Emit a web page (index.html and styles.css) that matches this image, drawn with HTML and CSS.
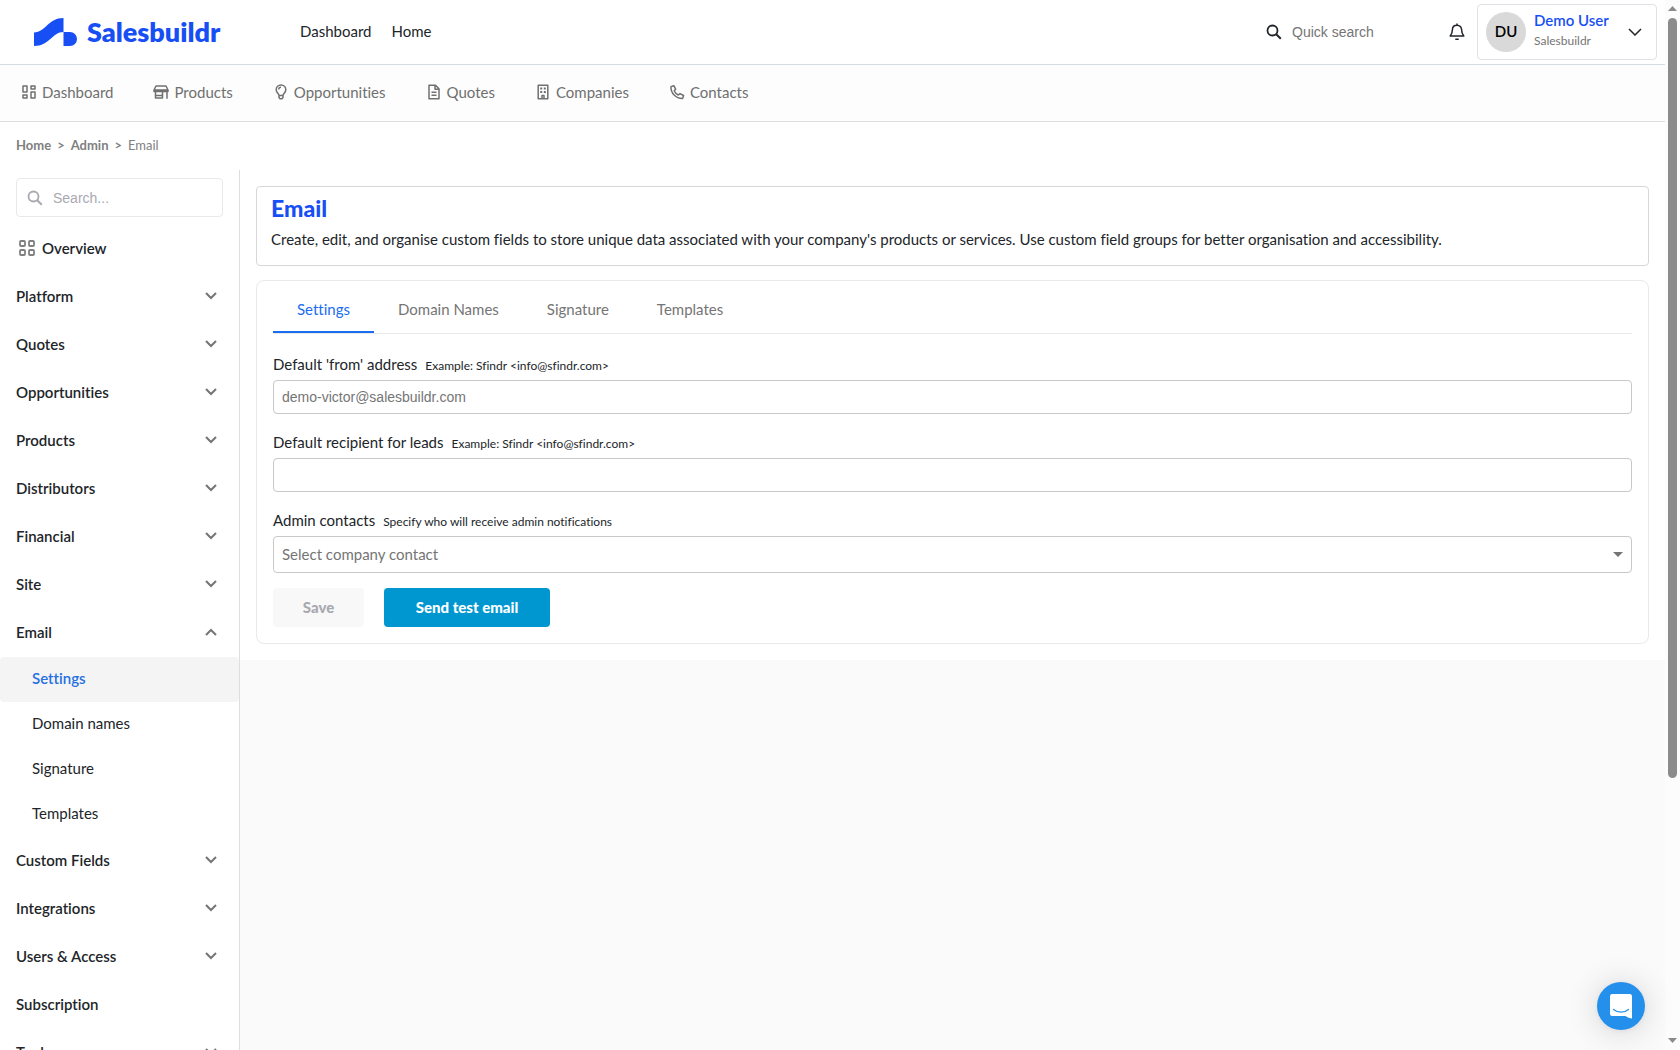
FILE: index.html
```html
<!DOCTYPE html>
<html lang="en">
<head>
<meta charset="utf-8">
<meta name="viewport" content="width=device-width, initial-scale=1">
<title>Email - Salesbuildr</title>
<link rel="stylesheet" href="styles.css">
</head>
<body>
<svg class="sprite" aria-hidden="true">
  <symbol id="down" viewBox="0 0 12 8"><path d="M1 1l5 5 5-5" fill="none" stroke="currentColor" stroke-width="2"/></symbol>
  <symbol id="search" viewBox="0 0 16 16"><circle cx="6.500" cy="6.500" r="5" fill="none" stroke="currentColor" stroke-width="1.800"/><path d="M10.200 10.200l4.600 4.600" stroke="currentColor" stroke-width="2"/></symbol>
</svg>
<div class="window">
  <div class="page">
    <header class="topbar">
      <a class="logo" href="#">
        <svg width="44" height="28" viewBox="0 0 44 28" fill="currentColor" aria-hidden="true"><path d="M0 14.500C12 14 14 0 29.500 0V14C18 14 16 28 0 28z"/><path d="M29.500 14H36a7 7 0 0 1 0 14h-6.500z"/></svg>
        <span>Salesbuildr</span>
      </a>
      <nav class="toplinks"><a href="#">Dashboard</a><a href="#">Home</a></nav>
      <label class="quick"><svg width="16" height="16" aria-hidden="true"><use href="#search"/></svg><input type="search" placeholder="Quick search" aria-label="Quick search"></label>
      <button class="bell" type="button" aria-label="Notifications"><svg width="16" height="18" viewBox="0 0 16 18" fill="none" stroke="currentColor" stroke-width="1.500"><path d="M8 2.200c-2.800 0-4.600 2-4.600 4.600 0 3-.8 4.500-2.200 6.200h13.600c-1.400-1.700-2.200-3.200-2.200-6.200 0-2.600-1.800-4.600-4.600-4.600zM8 .6v1.600M6.300 16.200h3.400" stroke-linejoin="round"/></svg></button>
      <button class="user" type="button">
        <span class="avatar">DU</span>
        <span class="who"><span class="name">Demo User</span><span class="org">Salesbuildr</span></span>
        <svg width="14" height="8" viewBox="0 0 14 8" fill="none" stroke="currentColor" stroke-width="1.500" aria-hidden="true"><path d="M1 1l6 6 6-6"/></svg>
      </button>
    </header>

    <nav class="modules">
      <a href="#"><svg viewBox="0 0 18 18"><path d="M3 3h4v6H3zM11 3h4v3h-4zM11 9h4v6h-4zM3 12h4v3H3z" stroke-linejoin="round"/></svg>Dashboard</a>
      <a href="#"><svg viewBox="0 0 18 18"><path d="M4 3h10l2 4v1.500H2V7zM3.500 8.500V15h7V8.500M3.500 12.500h7M15 8.500V15.700M2 7h14" stroke-linejoin="round"/></svg>Products</a>
      <a href="#"><svg viewBox="0 0 18 18"><path d="M7 12.500C7 10.500 4.200 9.800 4.200 6.700a4.800 4.800 0 0 1 9.600 0c0 3.100-2.800 3.800-2.800 5.800zM7 12.500v2l1 1.200h2l1-1.200v-2M6.700 6.500A2.300 2.300 0 0 1 9 4.300"/></svg>Opportunities</a>
      <a href="#"><svg viewBox="0 0 18 18"><path d="M4 2.200h6.500L14 5.700v10H4zM10 2.500v3.700h4M6.500 9.200h5M6.500 12.200h5" stroke-linejoin="round"/></svg>Quotes</a>
      <a href="#"><svg viewBox="0 0 18 18"><path d="M4.200 2.200h9.600v13.500H4.200zM8 15.500v-3h2v3" stroke-linejoin="round"/><path d="M6.200 5.500h2M9.800 5.500h2M6.200 9h2M9.800 9h2" stroke-width="2"/></svg>Companies</a>
      <a href="#"><svg viewBox="0 0 18 18"><path d="M5.800 2.700L3 3.600c-.5 6.500 5 12 11.600 11.800l1-2.900-3.600-1.900-1.700 1.400C8.300 11.100 7 9.600 6.200 7.800l1.500-1.700z" stroke-linejoin="round"/></svg>Contacts</a>
    </nav>

    <nav class="crumbs" aria-label="Breadcrumb"><a href="#">Home</a><b>&gt;</b><a href="#">Admin</a><b>&gt;</b><span>Email</span></nav>

    <div class="body">
      <aside class="sidebar">
        <label class="filter"><svg width="16" height="16" aria-hidden="true"><use href="#search"/></svg><input type="search" placeholder="Search..." aria-label="Search settings"></label>
        <a class="group overview" href="#"><svg width="18" height="18" viewBox="0 0 18 18" fill="none" stroke="currentColor" stroke-width="1.800" aria-hidden="true"><rect x="2" y="2" width="5" height="5" rx="1"/><rect x="11" y="2" width="5" height="5" rx="1"/><rect x="2" y="11" width="5" height="5" rx="1"/><rect x="11" y="11" width="5" height="5" rx="1"/></svg>Overview</a>
        <button class="group" type="button">Platform<svg class="chev"><use href="#down"/></svg></button>
        <button class="group" type="button">Quotes<svg class="chev"><use href="#down"/></svg></button>
        <button class="group" type="button">Opportunities<svg class="chev"><use href="#down"/></svg></button>
        <button class="group" type="button">Products<svg class="chev"><use href="#down"/></svg></button>
        <button class="group" type="button">Distributors<svg class="chev"><use href="#down"/></svg></button>
        <button class="group" type="button">Financial<svg class="chev"><use href="#down"/></svg></button>
        <button class="group" type="button">Site<svg class="chev"><use href="#down"/></svg></button>
        <button class="group" type="button" aria-expanded="true">Email<svg class="chev open"><use href="#down"/></svg></button>
        <a class="sub current" href="#">Settings</a>
        <a class="sub" href="#">Domain names</a>
        <a class="sub" href="#">Signature</a>
        <a class="sub" href="#">Templates</a>
        <button class="group" type="button">Custom Fields<svg class="chev"><use href="#down"/></svg></button>
        <button class="group" type="button">Integrations<svg class="chev"><use href="#down"/></svg></button>
        <button class="group" type="button">Users &amp; Access<svg class="chev"><use href="#down"/></svg></button>
        <a class="group" href="#">Subscription</a>
        <button class="group" type="button">Tools<svg class="chev"><use href="#down"/></svg></button>
      </aside>

      <main class="content">
        <section class="intro">
          <h1>Email</h1>
          <p>Create, edit, and organise custom fields to store unique data associated with your company's products or services. Use custom field groups for better organisation and accessibility.</p>
        </section>
        <form class="panel">
          <div class="tabs" role="tablist">
            <button type="button" role="tab" aria-selected="true">Settings</button>
            <button type="button" role="tab">Domain Names</button>
            <button type="button" role="tab">Signature</button>
            <button type="button" role="tab">Templates</button>
          </div>
          <label class="caption" for="from">Default 'from' address<small>Example: Sfindr &lt;info@sfindr.com&gt;</small></label>
          <input class="field" id="from" type="text" placeholder="demo-victor@salesbuildr.com">
          <label class="caption" for="leads">Default recipient for leads<small>Example: Sfindr &lt;info@sfindr.com&gt;</small></label>
          <input class="field" id="leads" type="text">
          <label class="caption" for="contacts">Admin contacts<small>Specify who will receive admin notifications</small></label>
          <div class="picker">
            <select id="contacts"><option>Select company contact</option></select>
            <svg width="10" height="5" viewBox="0 0 10 5" aria-hidden="true"><path d="M0 0h10L5 5z" fill="currentColor"/></svg>
          </div>
          <div class="actions"><button class="save" type="submit" disabled>Save</button><button class="send" type="button">Send test email</button></div>
        </form>
      </main>
    </div>
  </div>
  <div class="scrollbar" aria-hidden="true">
    <svg width="9" height="5" viewBox="0 0 9 5"><path d="M0 5L4.500 0 9 5z" fill="currentColor"/></svg>
    <div class="track"><div class="thumb"></div></div>
    <svg width="9" height="5" viewBox="0 0 9 5"><path d="M0 0h9L4.500 5z" fill="currentColor"/></svg>
  </div>
</div>
<button class="chat" type="button" aria-label="Open chat"><svg width="22" height="25" viewBox="0 0 22 25" aria-hidden="true"><path d="M2.500 0h17A2.300 2.300 0 0 1 22 2.300V24.500c-2-.3-4.500-1-6.500-2.500h-13A2.300 2.300 0 0 1 0 19.700V2.300A2.300 2.300 0 0 1 2.500 0z" fill="#fff"/><path d="M3.500 15.500c4.500 3.600 10.500 3.600 15 0" fill="none" stroke="#2490ec" stroke-width="1.300" stroke-linecap="round"/></svg></button>
</body>
</html>
```
FILE: styles.css
```css
* { box-sizing: border-box; }
body { margin: 0; font: 15px/20px Lato, "Open Sans", sans-serif; font-variant-ligatures: none; color: #212529; background: #fafafa; }
a { color: inherit; text-decoration: none; }
button { font: inherit; font-variant-ligatures: none; color: inherit; background: none; border: 0; padding: 0; text-align: left; }
input { font: 14px/20px "Liberation Sans", Arial, sans-serif; color: #333; background: none; border: 0; padding: 0; min-width: 0; outline: 0; }
input::placeholder { color: #757575; opacity: 1; }
svg { flex-shrink: 0; }
.sprite { display: none; }

.window { display: grid; grid-template-columns: minmax(0, 1fr) 15px; height: 100vh; }
.page { overflow-y: auto; scrollbar-width: none; }

.topbar { display: flex; align-items: center; height: 65px; padding: 0 8px 0 34px; background: #fff; border-bottom: 1px solid #d5dce2; }
.logo { display: flex; align-items: center; gap: 9px; width: 266px; color: #174ff5; font-size: 27px; font-weight: 800; line-height: 32px; }
.toplinks { display: flex; gap: 20px; margin-right: auto; padding-bottom: 2px; }
.quick { display: flex; align-items: center; gap: 10px; }
.quick input { width: 141px; }
.bell { display: flex; margin: 0 12px 0 16px; }
.user { display: flex; align-items: center; width: 180px; height: 56px; padding: 0 14px 0 8px; border: 1px solid #dee2e6; border-radius: 4px; background: #fff; }
.avatar { display: grid; place-items: center; width: 40px; height: 40px; padding-bottom: 2px; border-radius: 50%; background: #d9d9d9; color: #000; font-weight: 600; }
.who { display: flex; flex-direction: column; margin: 0 auto 0 8px; padding-bottom: 2px; }
.name { color: #174ff5; font-weight: 600; }
.org { color: #757575; font-size: 12px; line-height: 22px; }

.modules { display: flex; align-items: center; gap: 39px; height: 57px; padding: 0 20px 2px; color: #707070; background: #fdfdfd; border-bottom: 1px solid #dcdfe1; }
.modules a { display: flex; align-items: center; gap: 4px; }
.modules svg { width: 18px; height: 18px; fill: none; stroke: currentColor; stroke-width: 1.500; }

.crumbs { display: flex; align-items: center; gap: 6px; height: 48px; padding: 0 16px 2px; background: #fff; color: #808080; font-size: 13px; }
.crumbs a, .crumbs b { font-weight: 700; }

.body { display: grid; grid-template-columns: 240px minmax(0, 1fr); align-items: start; }
.sidebar { display: flex; flex-direction: column; padding-top: 8px; background: #fff; border-right: 1px solid #dcdfe1; }
.filter { display: flex; align-items: center; gap: 10px; height: 39px; margin: 0 16px 8px; padding: 0 10px; border: 1px solid #e9e9e9; border-radius: 4px; color: #a9a9b0; }
.filter input::placeholder { color: #a9a9b0; }
.group { display: flex; align-items: center; height: 48px; padding: 0 22px 2px 16px; font-weight: 600; }
.overview { gap: 6px; padding-left: 18px; }
.overview svg { color: #808080; }
.chev { width: 12px; height: 8px; margin-left: auto; color: #757575; }
.open { transform: rotate(180deg); }
.sub { padding: 11px 32px 14px; border-radius: 4px; }
.current { background: #f4f4f4; color: #2470e0; font-weight: 600; }

.content { padding: 16px; background: #fff; }
.intro { padding: 9px 14px 14px; border: 1px solid #d5d8da; border-radius: 4px; }
.intro h1 { margin: 0 0 7px; color: #174ff5; font-size: 23px; font-weight: 900; line-height: 24px; }
.intro p { margin: 0; line-height: 24px; }
.panel { margin-top: 14px; padding: 16px; border: 1px solid #e9e9e9; border-radius: 8px; }
.tabs { display: flex; height: 37px; margin-bottom: 20px; border-bottom: 1px solid #e9e9e9; }
.tabs button { padding: 2px 24px 12px; border-bottom: 2px solid transparent; color: #757575; }
.tabs [aria-selected] { color: #1a6cf0; border-color: #1a6cf0; }
.caption { display: flex; align-items: baseline; gap: 8px; margin-bottom: 4px; }
.caption small { font-size: 12px; }
.field { display: block; width: 100%; height: 34px; margin-bottom: 18px; padding: 0 8px; border: 1px solid #c8c8c8; border-radius: 4px; }
.picker { display: grid; align-items: center; }
.picker > * { grid-area: 1 / 1; }
.picker select { appearance: none; height: 37px; padding: 0 8px 2px; border: 1px solid #c8c8c8; border-radius: 4px; background: #fff; color: #757575; font: inherit; }
.picker svg { justify-self: end; margin-right: 9px; color: #757575; pointer-events: none; }
.actions { display: flex; gap: 20px; margin-top: 15px; font-weight: 900; }
.actions button { height: 39px; padding-bottom: 2px; border-radius: 4px; text-align: center; }
.save { width: 91px; background: #f8f8f8; color: #a9a9b0; }
.send { width: 166px; background: #0097d1; color: #fff; }

.scrollbar { display: flex; flex-direction: column; align-items: center; padding: 6px 0 7px; background: #fcfcfc; color: #8b8b8b; }
.track { flex: 1; padding: 7px 0; }
.thumb { width: 9px; height: 75%; border-radius: 5px; background: #8b8b8b; }
.chat { position: fixed; right: 35px; bottom: 20px; display: grid; place-items: center; width: 48px; height: 48px; border-radius: 50%; background: #2490ec; box-shadow: 0 1px 6px rgba(0,0,0,.06), 0 2px 32px rgba(0,0,0,.16); }
```
